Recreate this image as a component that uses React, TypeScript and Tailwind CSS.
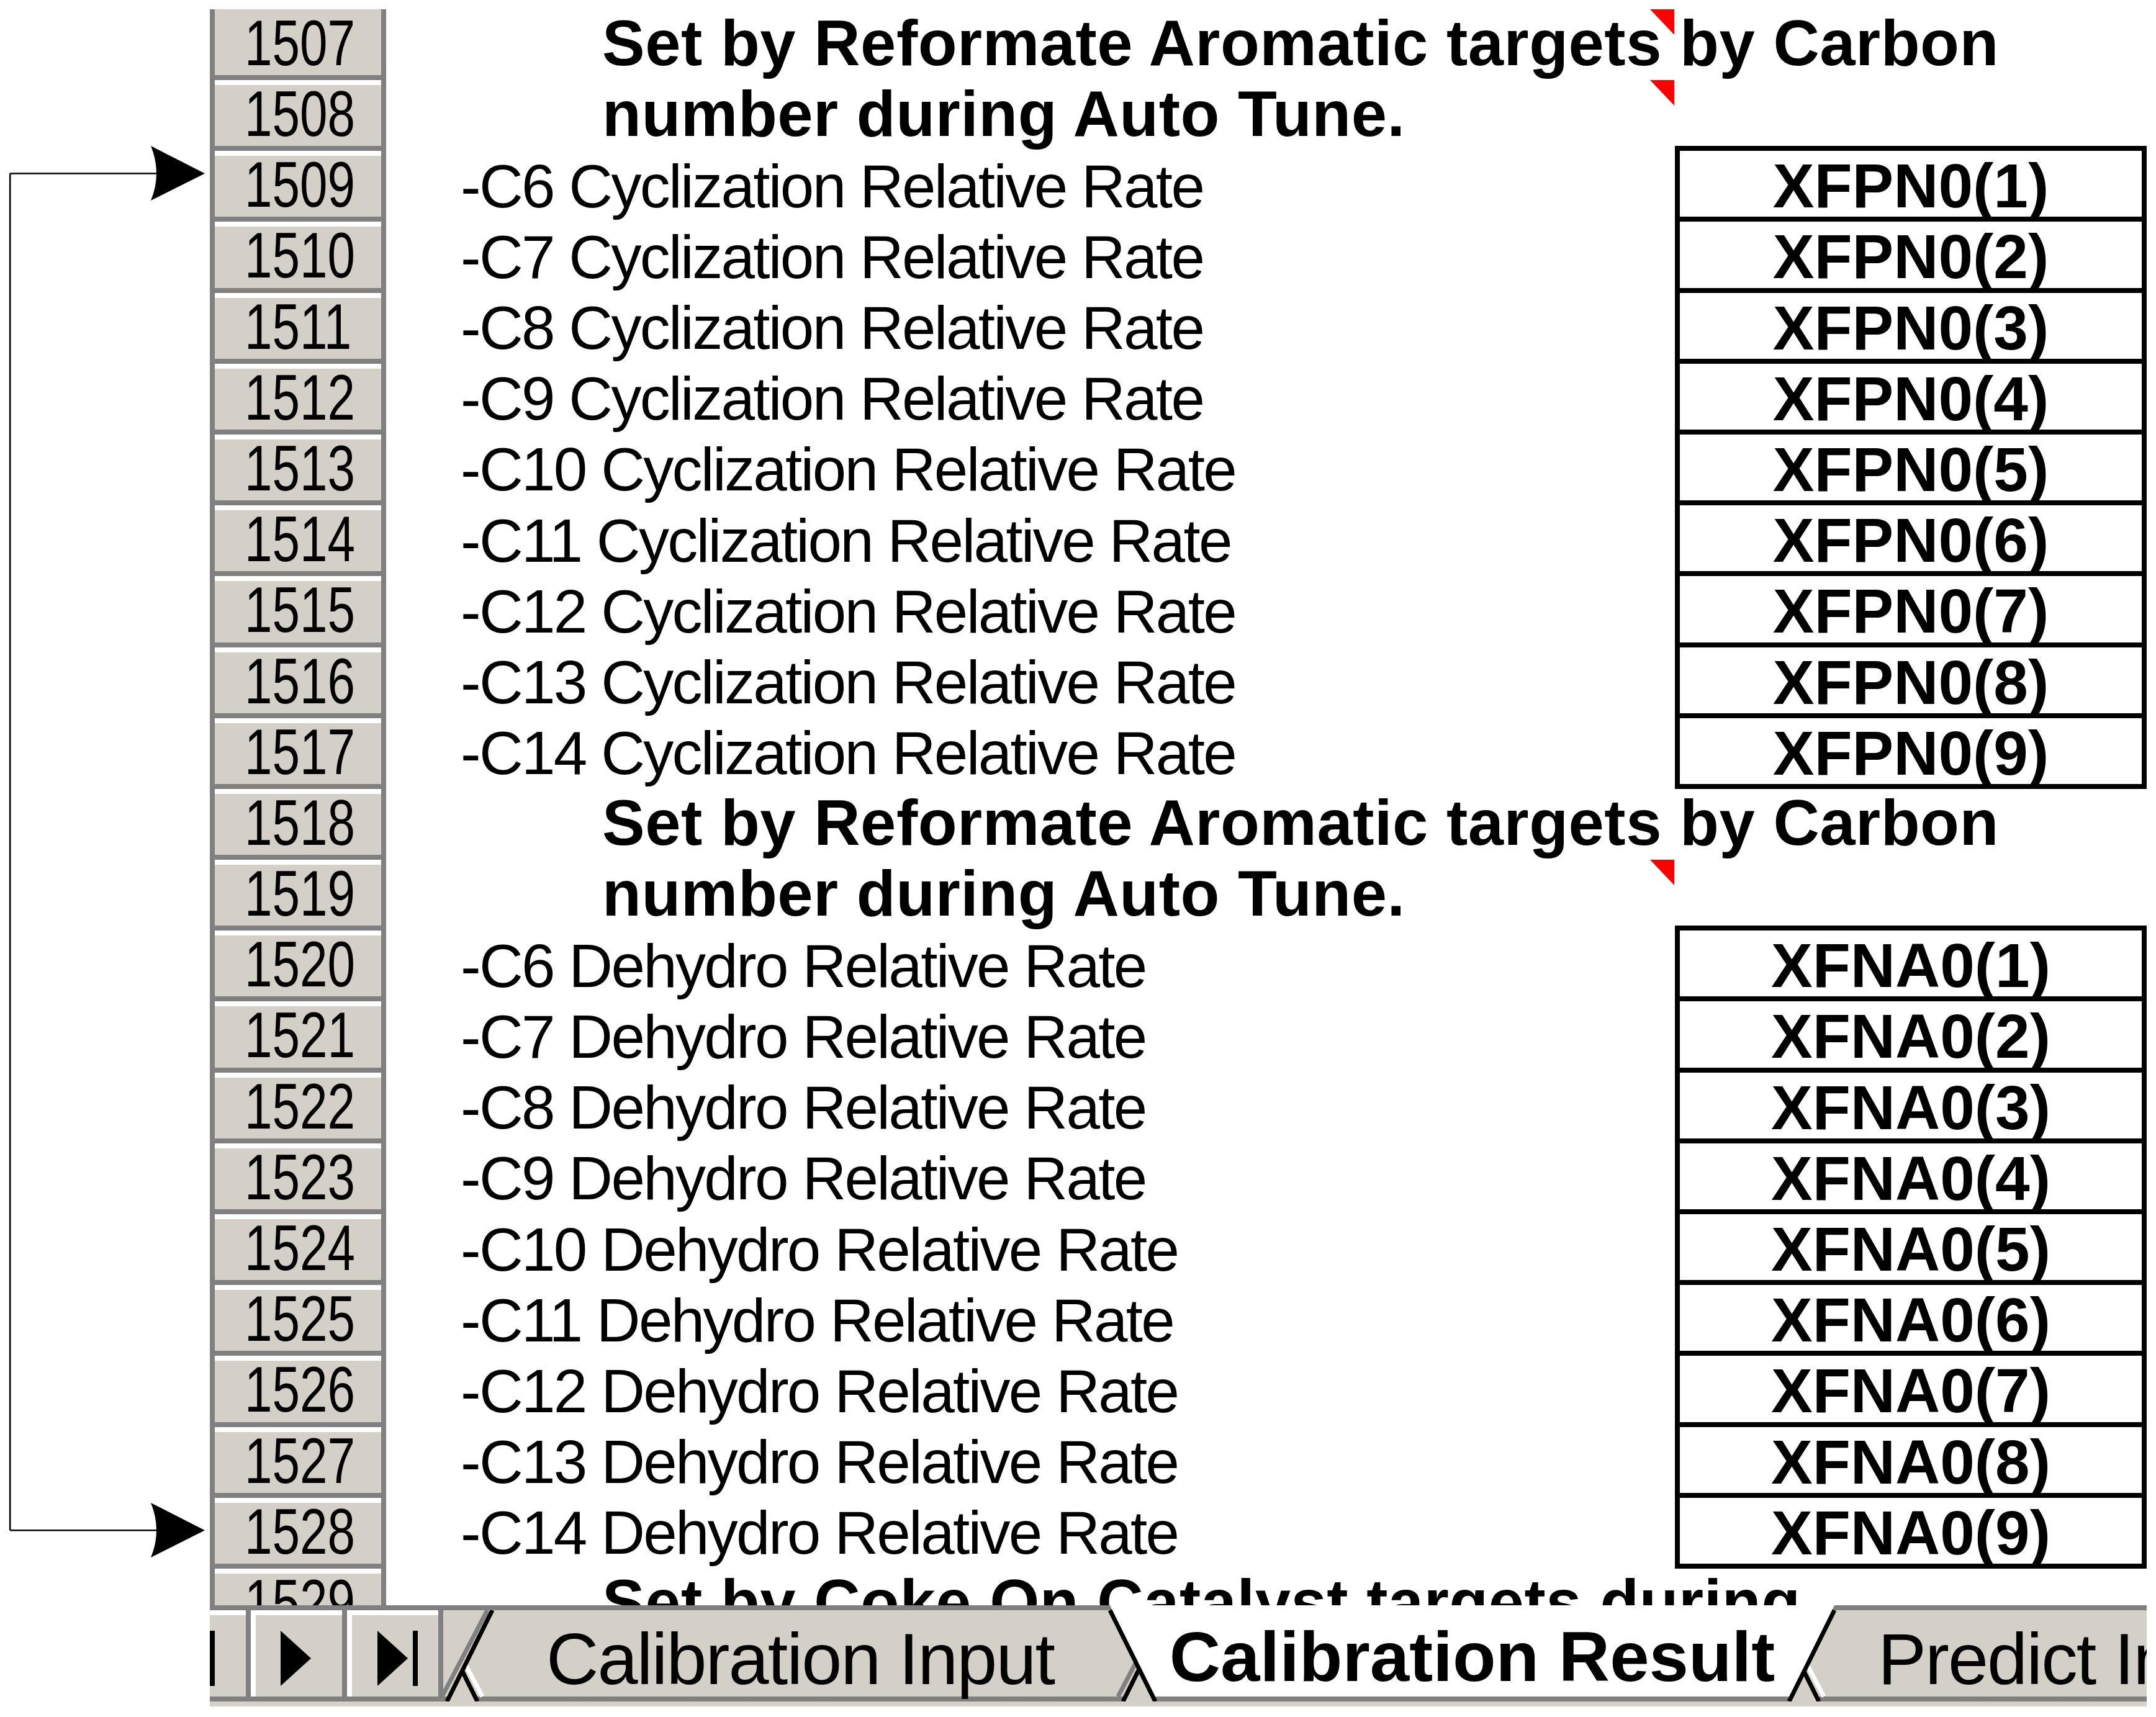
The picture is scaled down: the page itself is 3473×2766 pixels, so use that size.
import React from "react";

type SheetRow =
  | { n: number; kind: "head"; text: string; note?: boolean; boxTop?: boolean }
  | { n: number; kind: "item"; text: string; cell: string };

const HEAD_1 = "Set by Reformate Aromatic targets by Carbon";
const HEAD_2 = "number during Auto Tune.";

const ROWS: SheetRow[] = [
  { n: 1507, kind: "head", text: HEAD_1, note: true },
  { n: 1508, kind: "head", text: HEAD_2, note: true, boxTop: true },
  ...Array.from({ length: 9 }, (_, i) => ({
    n: 1509 + i,
    kind: "item" as const,
    text: `-C${6 + i} Cyclization Relative Rate`,
    cell: `XFPN0(${i + 1})`,
  })),
  { n: 1518, kind: "head", text: HEAD_1 },
  { n: 1519, kind: "head", text: HEAD_2, note: true, boxTop: true },
  ...Array.from({ length: 9 }, (_, i) => ({
    n: 1520 + i,
    kind: "item" as const,
    text: `-C${6 + i} Dehydro Relative Rate`,
    cell: `XFNA0(${i + 1})`,
  })),
  { n: 1529, kind: "head", text: "Set by Coke On Catalyst targets during" },
];

const TABS = [
  { label: "", cls: "w-[600px] ml-[-517px] h-[147px] z-30", w: 600, active: false, left: false },
  { label: "Calibration Input", cls: "w-[1194px] ml-[-105px] h-[147px] z-20", w: 1194, active: false, left: false },
  { label: "Calibration Result", cls: "w-[1175px] ml-[-102px] mt-[-8px] h-[155px] z-40", w: 1175, active: true, left: false },
  { label: "Predict Input", cls: "w-[800px] ml-[-106px] h-[147px] z-10", w: 800, active: false, left: true },
];

function RowHeader({ n, first }: { n: number; first: boolean }) {
  return (
    <div className="w-[284px] shrink-0 bg-[#808080] px-2">
      <div
        className={`${first ? "h-[106px] border-[#d4d0c8]" : "h-[106.2px] border-white"} border-t-8 bg-[#d4d0c8] pl-[48px]`}
      >
        <span className="block origin-left scale-x-[0.77] text-[104px] leading-[93px] text-black">{n}</span>
      </div>
    </div>
  );
}

// little red comment marker in the cell corner
function Note() {
  return (
    <svg className="absolute left-[2036px] top-0" width={39} height={41}>
      <polygon points="0,0 39,0 39,41" fill="#ff0000" />
    </svg>
  );
}

function Row({ row, first }: { row: SheetRow; first: boolean }) {
  return (
    <div className={`flex ${first ? "h-[114px]" : "h-[114.2px]"}`}>
      <RowHeader n={row.n} first={first} />
      {row.kind === "head" ? (
        <div className="relative flex flex-1">
          <div className="min-w-0 flex-1 whitespace-nowrap pl-[348px] pt-[3px] text-[103px] font-bold leading-none tracking-[0.5px] text-black">
            {row.text}
          </div>
          <div className={`w-[760px] shrink-0 ${row.boxTop ? "border-b-8 border-black" : ""}`} />
          {row.note && <Note />}
        </div>
      ) : (
        <div className="flex flex-1">
          <div className="min-w-0 flex-1 whitespace-nowrap pl-[120px] pt-[7.5px] text-[98px] leading-none tracking-[-2.7px] text-black">
            {row.text}
          </div>
          <div className="w-[760px] shrink-0 border-x-8 border-b-8 border-black pt-[6px] text-center text-[100px] font-bold leading-none text-black">
            {row.cell}
          </div>
        </div>
      )}
    </div>
  );
}

function Connector() {
  return (
    <svg width={338} height={2766} className="shrink-0">
      <path d="M16.2 279.5 V2465.3 M16.2 279.5 H252 M16.2 2465.3 H252" stroke="#000" strokeWidth={2.6} fill="none" />
      <path d="M243 235 L330 279.5 L243 323 Q261 279.5 243 235 Z" fill="#000" />
      <path d="M243 2421 L330 2465.3 L243 2509 Q261 2465.3 243 2421 Z" fill="#000" />
    </svg>
  );
}

function Tab({ label, cls, w, active, left }: (typeof TABS)[number]) {
  const h = active ? 155 : 147;
  const y0 = active ? 8 : 0;
  return (
    <div className={`relative flex shrink-0 ${cls} ${left ? "justify-start pl-[172px]" : "justify-center"}`}>
      <svg className="absolute inset-0" width={w} height={h}>
        <polygon points={`4,0 ${w - 4},0 ${w - 77},${h} 77,${h}`} fill={active ? "#ffffff" : "#d4d0c8"} />
        <rect x={77} y={h - 8} width={w - 154} height={8} fill="#808080" />
        {!active && <line x1={12} y1={0} x2={85} y2={h - 8} stroke="#ffffff" strokeWidth={7} />}
        {!active && <line x1={w - 12} y1={0} x2={w - 85} y2={h - 8} stroke="#808080" strokeWidth={7} />}
        <line x1={4} y1={y0} x2={77} y2={h} stroke="#000" strokeWidth={7} />
        <line x1={w - 4} y1={y0} x2={w - 77} y2={h} stroke="#000" strokeWidth={7} />
      </svg>
      {label && (
        <span
          className={`relative whitespace-nowrap leading-none text-black ${
            active ? "pt-[26px] text-[114px] font-bold" : "pt-[20px] text-[117px] tracking-[-2px]"
          }`}
        >
          {label}
        </span>
      )}
    </div>
  );
}

function NavButtons() {
  return (
    <div className="flex h-[155px] w-[376px] shrink-0 border-y-8 border-[#808080] bg-[#808080]">
      <div className="flex h-[139px] gap-2 pr-2">
        <div className="w-[58px] border-t-8 border-white bg-[#d4d0c8] pt-[25px]">
          <div className="h-[89px] w-2 bg-black" />
        </div>
        <div className="w-[147px] border-l-8 border-t-8 border-white bg-[#d4d0c8] pl-[40px] pt-[25px]">
          <svg width={49} height={89}>
            <polygon points="0,0 49,44.5 0,89" fill="#000" />
          </svg>
        </div>
        <div className="flex w-[147px] gap-2 border-l-8 border-t-8 border-white bg-[#d4d0c8] pl-[41px] pt-[25px]">
          <svg width={49} height={89}>
            <polygon points="0,0 49,44.5 0,89" fill="#000" />
          </svg>
          <div className="h-[89px] w-2 bg-black" />
        </div>
      </div>
    </div>
  );
}

export default function App() {
  return (
    <div className="relative h-[2766px] w-[3473px] overflow-hidden bg-white font-['Liberation_Sans',Arial,sans-serif]">
      <div className="flex">
        <Connector />
        <div className="w-[3120px] shrink-0">
          <div className="h-[15px]" />
          {/* worksheet rows */}
          <div className="h-[2571px] overflow-hidden">
            {ROWS.map((row, i) => (
              <Row key={row.n} row={row} first={i === 0} />
            ))}
          </div>
          {/* sheet tabs */}
          <div className="flex h-[155px]">
            <NavButtons />
            <div className="h-[155px] w-[2744px] shrink-0 overflow-hidden">
              <div className="flex h-[155px] items-start border-t-8 border-[#808080] bg-[#d4d0c8]">
                {TABS.map((t) => (
                  <Tab key={t.cls} {...t} />
                ))}
              </div>
            </div>
          </div>
          <div className="h-2 bg-[#d4d0c8]" />
        </div>
      </div>
    </div>
  );
}
